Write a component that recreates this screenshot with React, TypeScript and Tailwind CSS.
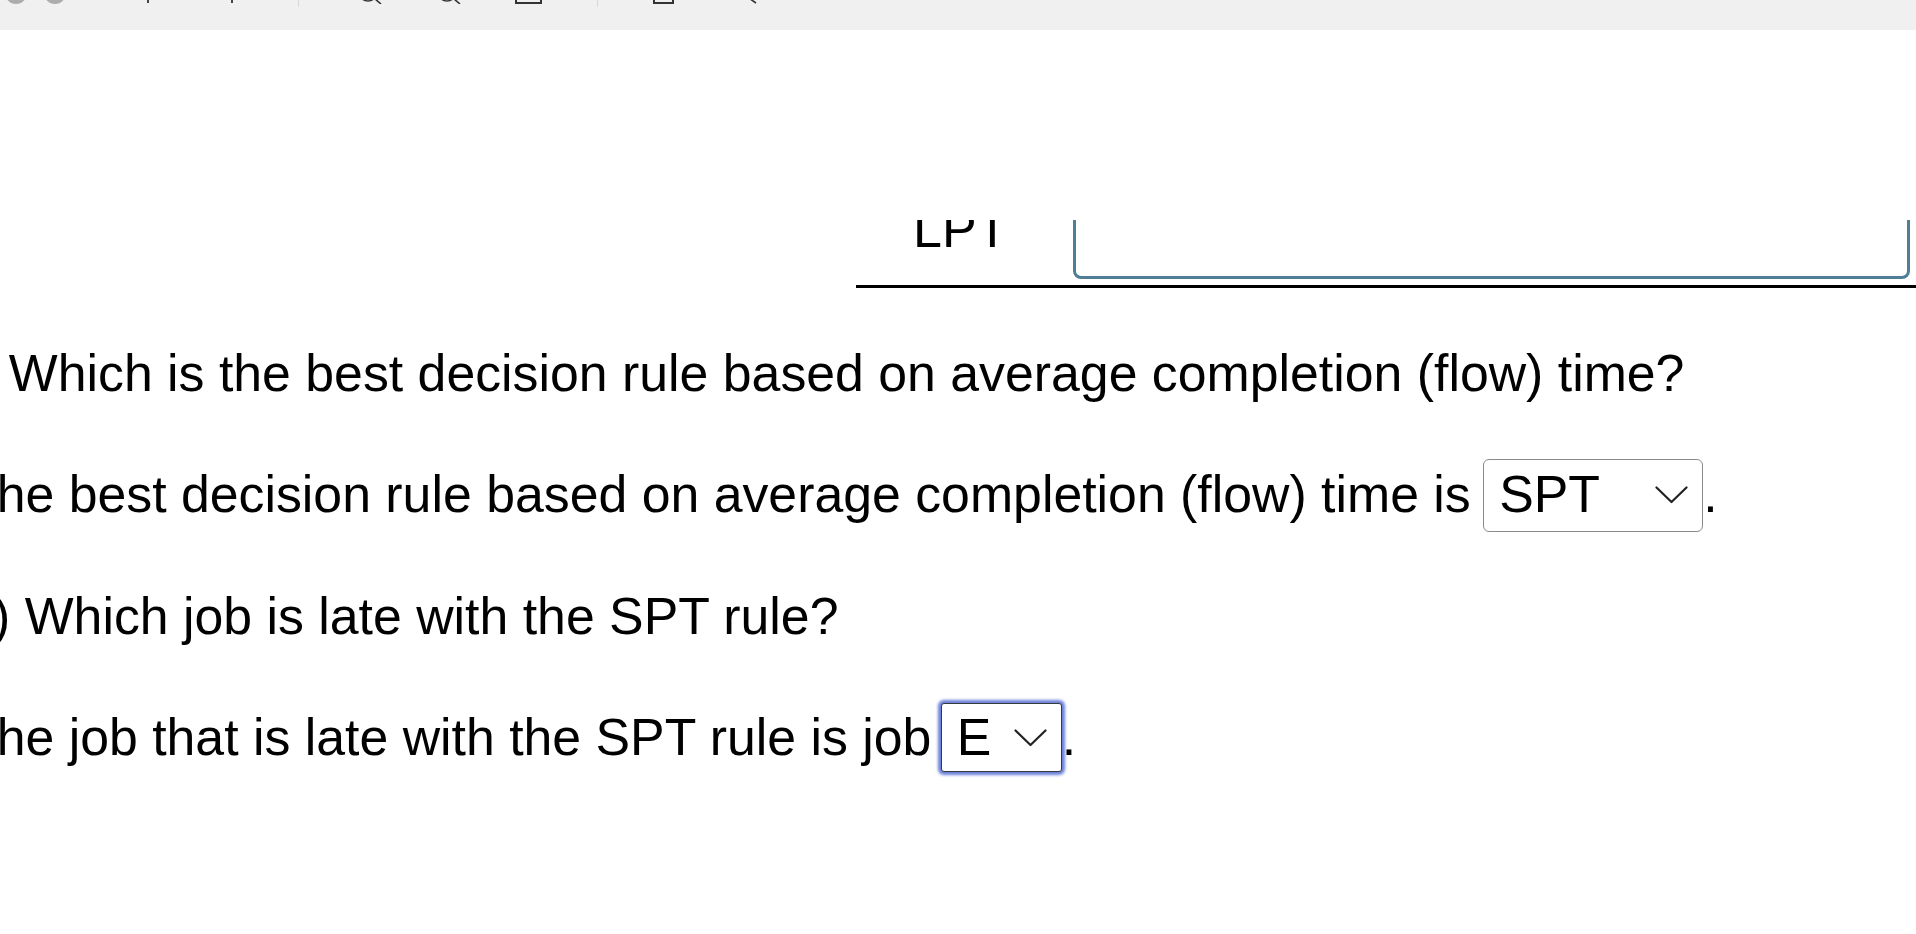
import React from "react";

// fake select box, drawn like the browser's native one
function SelectBox({
  value,
  width,
  height,
  margin,
  focused,
}: {
  value: string;
  width: string;
  height: string;
  margin: string;
  focused?: boolean;
}) {
  return (
    <span
      className={`inline-flex items-center justify-between pl-[15px] pr-[14px] leading-none align-baseline bg-white ${margin} ${width} ${height} ${
        focused
          ? "border-[1.5px] border-[#3a3a3a] rounded-[3px] shadow-[0_0_3px_3px_#6a80da]"
          : "border-[1.5px] border-[#8a8a8a] rounded-[6px]"
      }`}
    >
      <span>{value}</span>
      <svg width="33" height="18" viewBox="0 0 33 18" fill="none" stroke="#222" strokeWidth="2.2" strokeLinecap="round" strokeLinejoin="round">
        <polyline points="1.5,1.5 16.5,16 31.5,1.5" />
      </svg>
    </span>
  );
}

function Magnifier() {
  return (
    <svg width="25" height="25" viewBox="0 0 25 25" fill="none" stroke="#333" strokeWidth="1.6">
      <circle cx="10" cy="13" r="9" />
      <line x1="16.5" y1="19.5" x2="23" y2="25" />
    </svg>
  );
}

export default function App() {
  return (
    <div className="w-[1916px] h-[934px] overflow-hidden bg-white text-black font-['Liberation_Sans',Arial,sans-serif]">
      {/* browser toolbar, mostly scrolled off the top */}
      <div className="h-[30px] bg-[#f0f0f0] overflow-hidden">
        <div className="flex items-end h-[4px]">
          <div className="ml-[5px] w-[22px] h-[22px] shrink-0 rounded-full bg-[#acacac]" />
          <div className="ml-[17px] w-[22px] h-[22px] shrink-0 rounded-full bg-[#acacac]" />
          <div className="ml-[81px] mb-[1px] w-[2px] h-[4px] shrink-0 bg-[#444]" />
          <div className="ml-[82px] mb-[1px] w-[2px] h-[4px] shrink-0 bg-[#444]" />
          <div className="ml-[65px] self-start w-px h-[7px] shrink-0 bg-[#d8d8d8]" />
          <div className="ml-[59px] shrink-0">
            <Magnifier />
          </div>
          <div className="ml-[54px] shrink-0">
            <Magnifier />
          </div>
          <div className="ml-[53px] w-[27px] h-[10px] shrink-0 border-2 border-t-0 border-[#333]" />
          <div className="ml-[55px] self-start w-px h-[7px] shrink-0 bg-[#d8d8d8]" />
          <div className="ml-[55px] w-[21px] h-[10px] shrink-0 border-2 border-t-0 border-[#333]" />
          <div className="ml-[69px] shrink-0">
            <svg width="15" height="10" viewBox="0 0 15 10" fill="none" stroke="#333" strokeWidth="1.6">
              <line x1="0" y1="0" x2="13" y2="9" />
            </svg>
          </div>
        </div>
      </div>

      <div className="h-[190px]" />

      {/* last table row, partly hidden */}
      <div className="h-[68px] overflow-hidden">
        <div className="ml-[856px] h-full flex border-b-[3px] border-black">
          <div className="w-[217px] shrink-0 pl-[57px] -mt-[17px] text-[52px] leading-none">LPT</div>
          <div className="flex-1 flex items-end pb-[6px]">
            <div className="w-[837px] h-[100px] shrink-0 border-[3px] border-[#4f7e97] rounded-[8px]" />
          </div>
        </div>
      </div>

      {/* questions */}
      <div className="mt-[25px] text-[51.8px] leading-[121.3px] whitespace-nowrap">
        <div className="-ml-[66px]">(c) Which is the best decision rule based on average completion (flow) time?</div>
        <div className="-ml-[35px]">
          The best decision rule based on average completion (flow) time is{" "}
          <SelectBox value="SPT" width="w-[220px]" height="h-[73px]" margin="-ml-[2px]" />.
        </div>
        <div className="-ml-[53px]">(d) Which job is late with the SPT rule?</div>
        <div className="-ml-[35px]">
          The job that is late with the SPT rule is job{" "}
          <SelectBox value="E" width="w-[121px]" height="h-[69px]" margin="-ml-[5px]" focused />.
        </div>
      </div>
    </div>
  );
}
